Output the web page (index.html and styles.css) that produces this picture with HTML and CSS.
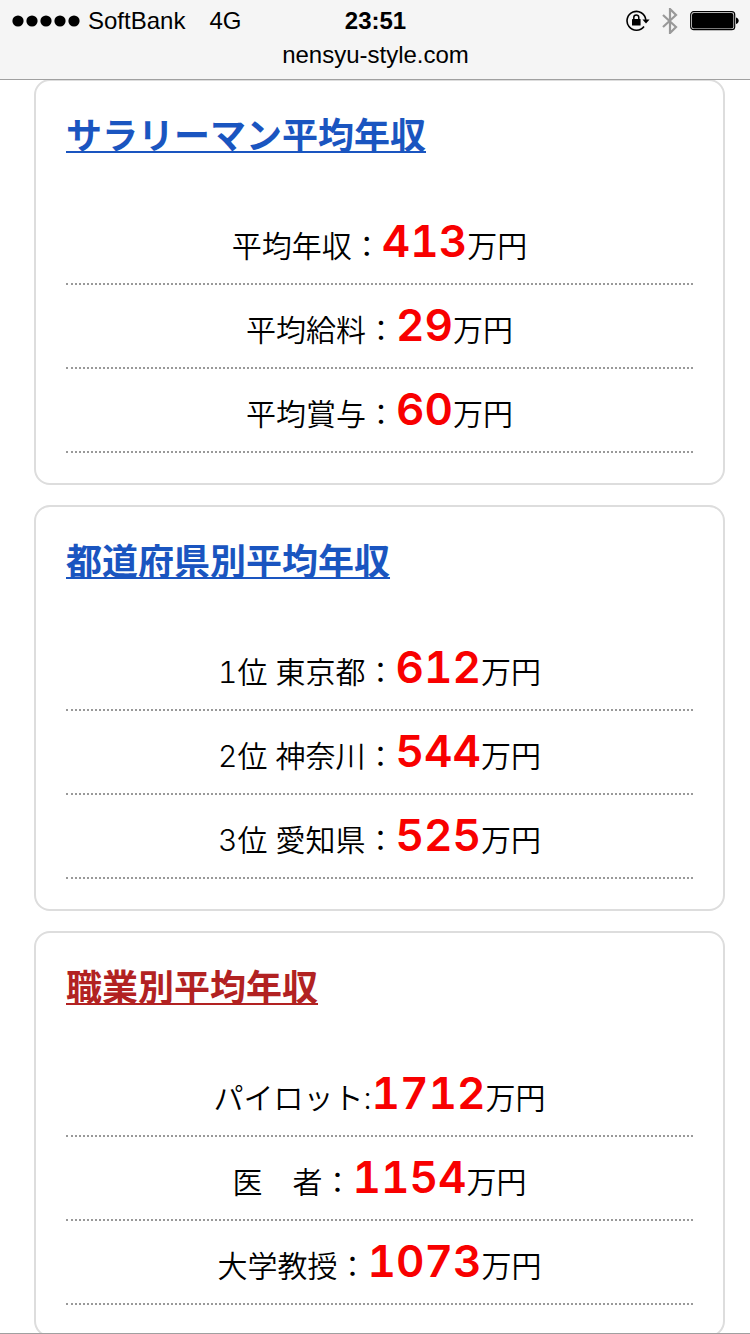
FILE: index.html
```html
<!DOCTYPE html>
<html lang="ja">
  <head>
    <title>nensyu-style.com</title>
    <meta charset="UTF-8" />
    <meta name="viewport" content="width=device-width, initial-scale=1" />
    <link rel="stylesheet" href="styles.css">
  </head>

  <body>
    <header class="header">
      <div class="status">
        <div class="carrier">
          <svg class="signal" width="68" height="12" viewBox="0 0 68 12">
            <circle cx="6" cy="6" r="5.6" />
            <circle cx="20" cy="6" r="5.6" />
            <circle cx="34" cy="6" r="5.6" />
            <circle cx="48" cy="6" r="5.6" />
            <circle cx="62" cy="6" r="5.6" />
          </svg>
          <span class="carrier_name">SoftBank</span>
          <span>4G</span>
        </div>
        <div class="time">23:51</div>
        <div class="status_icons">
          <svg width="24" height="22" viewBox="0 0 24 22">
            <path d="M18 16.4A9.4 9.4 0 1 1 19.8 9.8" fill="none" stroke="#000" stroke-width="1.6" />
            <path d="M16.4 9.4h7.2l-3.6 4z" />
            <rect x="6" y="9" width="8.6" height="6.6" rx="0.6" />
            <path d="M7.8 10V7.4a2.5 2.5 0 0 1 5 0V10" fill="none" stroke="#000" stroke-width="1.5" />
          </svg>
          <svg class="bluetooth" width="16" height="26" viewBox="0 0 16 26">
            <path d="M1 7l13 12-6 6V1l6 6L1 19" fill="none" stroke="#999" stroke-width="2.2" />
          </svg>
          <svg width="49" height="20" viewBox="0 0 49 20">
            <rect x="0.7" y="0.7" width="44" height="18" rx="3" fill="none" stroke="#000" stroke-width="1.2" />
            <rect x="2" y="2" width="41.4" height="15.4" rx="2" />
            <path d="M46 6.4c3.6 0.6 3.6 6 0 6.6z" />
          </svg>
        </div>
      </div>
      <div class="url">nensyu-style.com</div>
    </header>

    <main class="content">
      <section class="card">
        <h2 class="card_title"><a href="#">サラリーマン平均年収</a></h2>
        <ul class="list">
          <li>平均年収：<strong>413</strong>万円</li>
          <li>平均給料：<strong>29</strong>万円</li>
          <li>平均賞与：<strong>60</strong>万円</li>
        </ul>
      </section>

      <section class="card">
        <h2 class="card_title"><a href="#">都道府県別平均年収</a></h2>
        <ul class="list">
          <li>1位 東京都：<strong>612</strong>万円</li>
          <li>2位 神奈川：<strong>544</strong>万円</li>
          <li>3位 愛知県：<strong>525</strong>万円</li>
        </ul>
      </section>

      <section class="card">
        <h2 class="card_title"><a class="current" href="#">職業別平均年収</a></h2>
        <ul class="list">
          <li>パイロット:<strong>1712</strong>万円</li>
          <li>医　者：<strong>1154</strong>万円</li>
          <li>大学教授：<strong>1073</strong>万円</li>
        </ul>
      </section>
    </main>
  </body>
</html>
```

FILE: styles.css
```css
* {
  box-sizing: border-box;
}

body {
  margin: 0;
  height: 100vh;
  display: flex;
  flex-direction: column;
  background: #fff;
  color: #000;
  font-family: Inter, "Noto Sans CJK JP", sans-serif;
}

.header {
  position: relative;
  flex: none;
  height: 80px;
  padding: 6px 11px 0 12px;
  background: #f5f5f5;
  border-bottom: 1px solid #a0a0a0;
  font-family: "Liberation Sans", Arial, sans-serif;
  font-size: 24px;
}

.status {
  display: grid;
  grid-template-columns: 1fr auto 1fr;
  align-items: center;
  height: 30px;
}

.carrier {
  display: flex;
  align-items: center;
}

.signal {
  margin-right: 8px;
}

.carrier_name {
  margin-right: 24px;
}

.time {
  font-weight: bold;
}

.status_icons {
  display: flex;
  justify-content: flex-end;
  align-items: center;
}

.bluetooth {
  margin: 0 12px;
}

.url {
  line-height: 38px;
  text-align: center;
}

.content {
  flex: 1;
  min-height: 0;
  margin-top: -1px;
  padding: 0 25px 0 34px;
  overflow-y: auto;
  scrollbar-width: none;
  border-bottom: 1px solid #a0a0a0;
}

.card {
  margin-bottom: 20px;
  padding: 30px;
  border: 2px solid #ddd;
  border-radius: 16px;
}

.card_title {
  margin: 0;
  height: 90px;
  font-size: 36px;
  font-weight: bold;
  line-height: 50px;
}

.card_title a {
  color: #1a55c0;
  text-decoration: underline;
  text-decoration-thickness: 2px;
  text-underline-offset: 2px;
  text-decoration-skip-ink: none;
}

.card_title .current {
  color: #b22222;
}

.list {
  margin: 0;
  padding: 0;
  list-style: none;
}

.list li {
  height: 84px;
  border-bottom: 2px dotted #999;
  font-size: 30px;
  font-weight: 350;
  font-variant-numeric: tabular-nums;
  line-height: 80px;
  text-align: center;
}

.list strong {
  color: #f80000;
  font-size: 44px;
  font-weight: 600;
}
```
